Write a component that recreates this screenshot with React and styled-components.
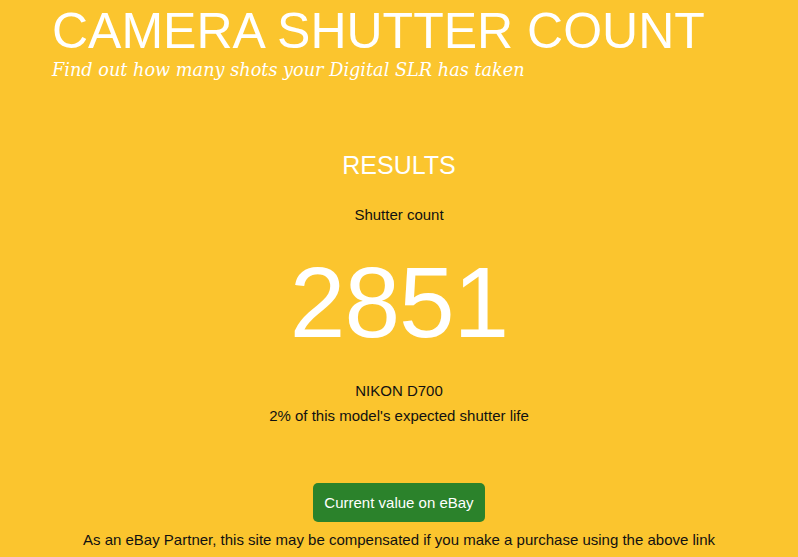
import styled, { createGlobalStyle } from 'styled-components';

const GlobalStyle = createGlobalStyle`
  html, body {
    margin: 0;
    padding: 0;
    background: #fbc52e;
  }
  body {
    font-family: "Liberation Sans", Arial, sans-serif;
  }
`;

const Page = styled.div`
  min-height: 557px;
  background: #fbc52e;
  overflow: hidden;
`;

const Header = styled.header`
  padding: 4px 0 0 52px;
`;

const Title = styled.h1`
  margin: 0;
  font-family: "Liberation Sans", Arial, sans-serif;
  font-weight: 400;
  font-size: 50px;
  line-height: 54px;
  color: #fff;
`;

const Tagline = styled.p`
  margin: 0;
  font-family: "DejaVu Serif", Georgia, serif;
  font-style: italic;
  font-size: 17.7px;
  line-height: 24px;
  color: #fff;
`;

const Results = styled.main`
  display: flex;
  flex-direction: column;
  align-items: center;
  text-align: center;
  padding-top: 68px;
`;

const Heading = styled.h2`
  margin: 0;
  font-weight: 400;
  font-size: 25px;
  line-height: 30px;
  color: #fff;
`;

const Label = styled.p`
  margin: ${(p) => p.$top || 0}px 0 0;
  font-size: 15px;
  line-height: 22px;
  color: #111;
`;

const Count = styled.div`
  margin-top: 16px;
  font-size: 100px;
  line-height: 120px;
  letter-spacing: -1px;
  color: #fff;
`;

const Button = styled.a`
  margin-top: 56px;
  display: inline-flex;
  align-items: center;
  justify-content: center;
  height: 39px;
  padding: 0 11px;
  border-radius: 5px;
  background: #2b822b;
  color: #fff;
  font-size: 15px;
  text-decoration: none;
`;

const Note = styled.p`
  margin: 7px 0 0;
  font-size: 15px;
  line-height: 22px;
  color: #111;
`;

export default function App() {
  return (
    <Page>
      <GlobalStyle />
      <Header>
        <Title>CAMERA SHUTTER COUNT</Title>
        <Tagline>Find out how many shots your Digital SLR has taken</Tagline>
      </Header>
      <Results>
        <Heading>RESULTS</Heading>
        <Label $top={24}>Shutter count</Label>
        <Count>2851</Count>
        <Label $top={18}>NIKON D700</Label>
        <Label $top={3}>2% of this model's expected shutter life</Label>
        <Button href="#">Current value on eBay</Button>
        <Note>As an eBay Partner, this site may be compensated if you make a purchase using the above link</Note>
      </Results>
    </Page>
  );
}
